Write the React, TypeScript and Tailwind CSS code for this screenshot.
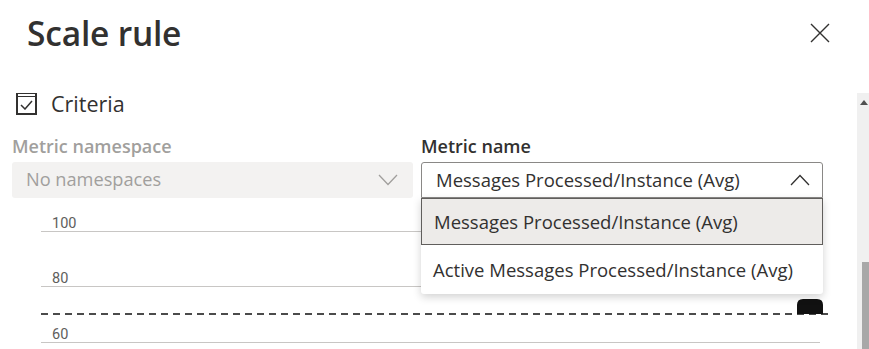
import React from 'react';

const font = { fontFamily: '"Open Sans", "Noto Sans", sans-serif' };

function Chevron({ up, className }: { up?: boolean; className?: string }) {
   return (
      <svg width="20" height="12" viewBox="0 0 20 12" className={className}>
         <path
            d={up ? 'M1 11 L10 1.5 L19 11' : 'M1 1 L10 10.5 L19 1'}
            fill="none"
            stroke="currentColor"
            strokeWidth="1.3"
         />
      </svg>
   );
}

function Chart() {
   const rows = [
      { label: '100', y: 33 },
      { label: '80', y: 88 },
      { label: '60', y: 144 },
   ];
   return (
      <svg width="857" height="151" className="block">
         {rows.map((r) => (
            <g key={r.label}>
               <text x="52" y={r.y - 3} fontSize="14.5" fill="#605e5c" fontFamily="Roboto, sans-serif">
                  {r.label}
               </text>
               <line x1="41" x2="820" y1={r.y + 0.5} y2={r.y + 0.5} stroke="#c8c6c4" strokeWidth="1" />
            </g>
         ))}
         <line x1="41" x2="828" y1="116" y2="116" stroke="#111" strokeWidth="1.5" strokeDasharray="7 5" />
         <path d="M797 116 L797 107 Q797 101 803 101 L817 101 Q823 101 823 107 L823 116 Z" fill="#111" />
      </svg>
   );
}

export default function App() {
   return (
      <div className="relative w-[869px] h-[349px] overflow-hidden bg-white text-[#323130]" style={font}>
         <div className="flex items-start justify-between h-[93px]">
            <h1 className="pl-[27px] pt-[8px] text-[33.5px] font-semibold leading-[50px] tracking-[-0.2px]">Scale rule</h1>
            <svg width="20" height="20" viewBox="0 0 20 20" className="mt-[23px] mr-[39px]">
               <path d="M1 1 L19 19 M19 1 L1 19" stroke="#323130" strokeWidth="1.4" />
            </svg>
         </div>

         <div className="flex h-[256px]">
            <div className="flex-1 flex flex-col relative">
               <div className="flex items-center h-[22px] pl-[16px]">
                  <div className="w-[21px] h-[22px] border-2 border-[#323130] border-t-[1px] flex items-center justify-center relative">
                     <div className="absolute left-0 right-0 top-[2px] h-[1px] bg-[#323130]" />
                     <svg width="13" height="10" viewBox="0 0 13 10" className="mt-[3px]">
                        <path d="M1 5 L5 9 L12 1" fill="none" stroke="#323130" strokeWidth="1.5" />
                     </svg>
                  </div>
                  <span className="ml-[14px] text-[21.5px] leading-[22px] text-[#323130]">Criteria</span>
               </div>

               <div className="flex gap-[8px] pl-[12px] pr-[34px] mt-[21px]">
                  <div className="w-[401px] flex flex-col">
                     <div className="text-[18px] font-semibold leading-[20px] text-[#a19f9d] h-[26px]">Metric namespace</div>
                     <div className="h-[36px] rounded-[3px] bg-[#f3f2f1] flex items-center justify-between pl-[14px] pr-[15px]">
                        <span className="text-[18.2px] text-[#a19f9d]">No namespaces</span>
                        <Chevron className="text-[#a19f9d]" />
                     </div>
                  </div>
                  <div className="w-[402px] flex flex-col relative">
                     <div className="text-[18px] font-semibold leading-[20px] text-[#323130] h-[26px]">Metric name</div>
                     <div className="h-[36px] rounded-t-[3px] border border-[#8a8886] flex items-center justify-between pl-[14px] pr-[12px]">
                        <span className="text-[18.5px] text-[#323130]">Messages Processed/Instance (Avg)</span>
                        <Chevron up className="text-[#323130]" />
                     </div>
                     <div className="absolute left-0 right-0 top-[62px] z-10 bg-white rounded-b-[3px] shadow-[0_3px_8px_rgba(0,0,0,0.18)]">
                        <div className="h-[47px] bg-[#edebe9] border border-[#605e5c] flex items-center pl-[12px] text-[18.5px] text-[#323130]">
                           Messages Processed/Instance (Avg)
                        </div>
                        <div className="h-[49px] flex items-center pl-[12px] text-[18.5px] text-[#323130]">
                           Active Messages Processed/Instance (Avg)
                        </div>
                     </div>
                  </div>
               </div>

               <Chart />
            </div>

            <div className="w-[12px] bg-[#f0f0f0] flex flex-col items-center">
               <svg width="8" height="5" viewBox="0 0 8 5" className="mt-[7px] ml-[2px]">
                  <path d="M0 5 L4 0 L8 5 Z" fill="#505050" />
               </svg>
               <div className="mt-[157px] ml-[6px] w-[9px] flex-1 bg-[#a8a8a8]" />
            </div>
         </div>
      </div>
   );
}
